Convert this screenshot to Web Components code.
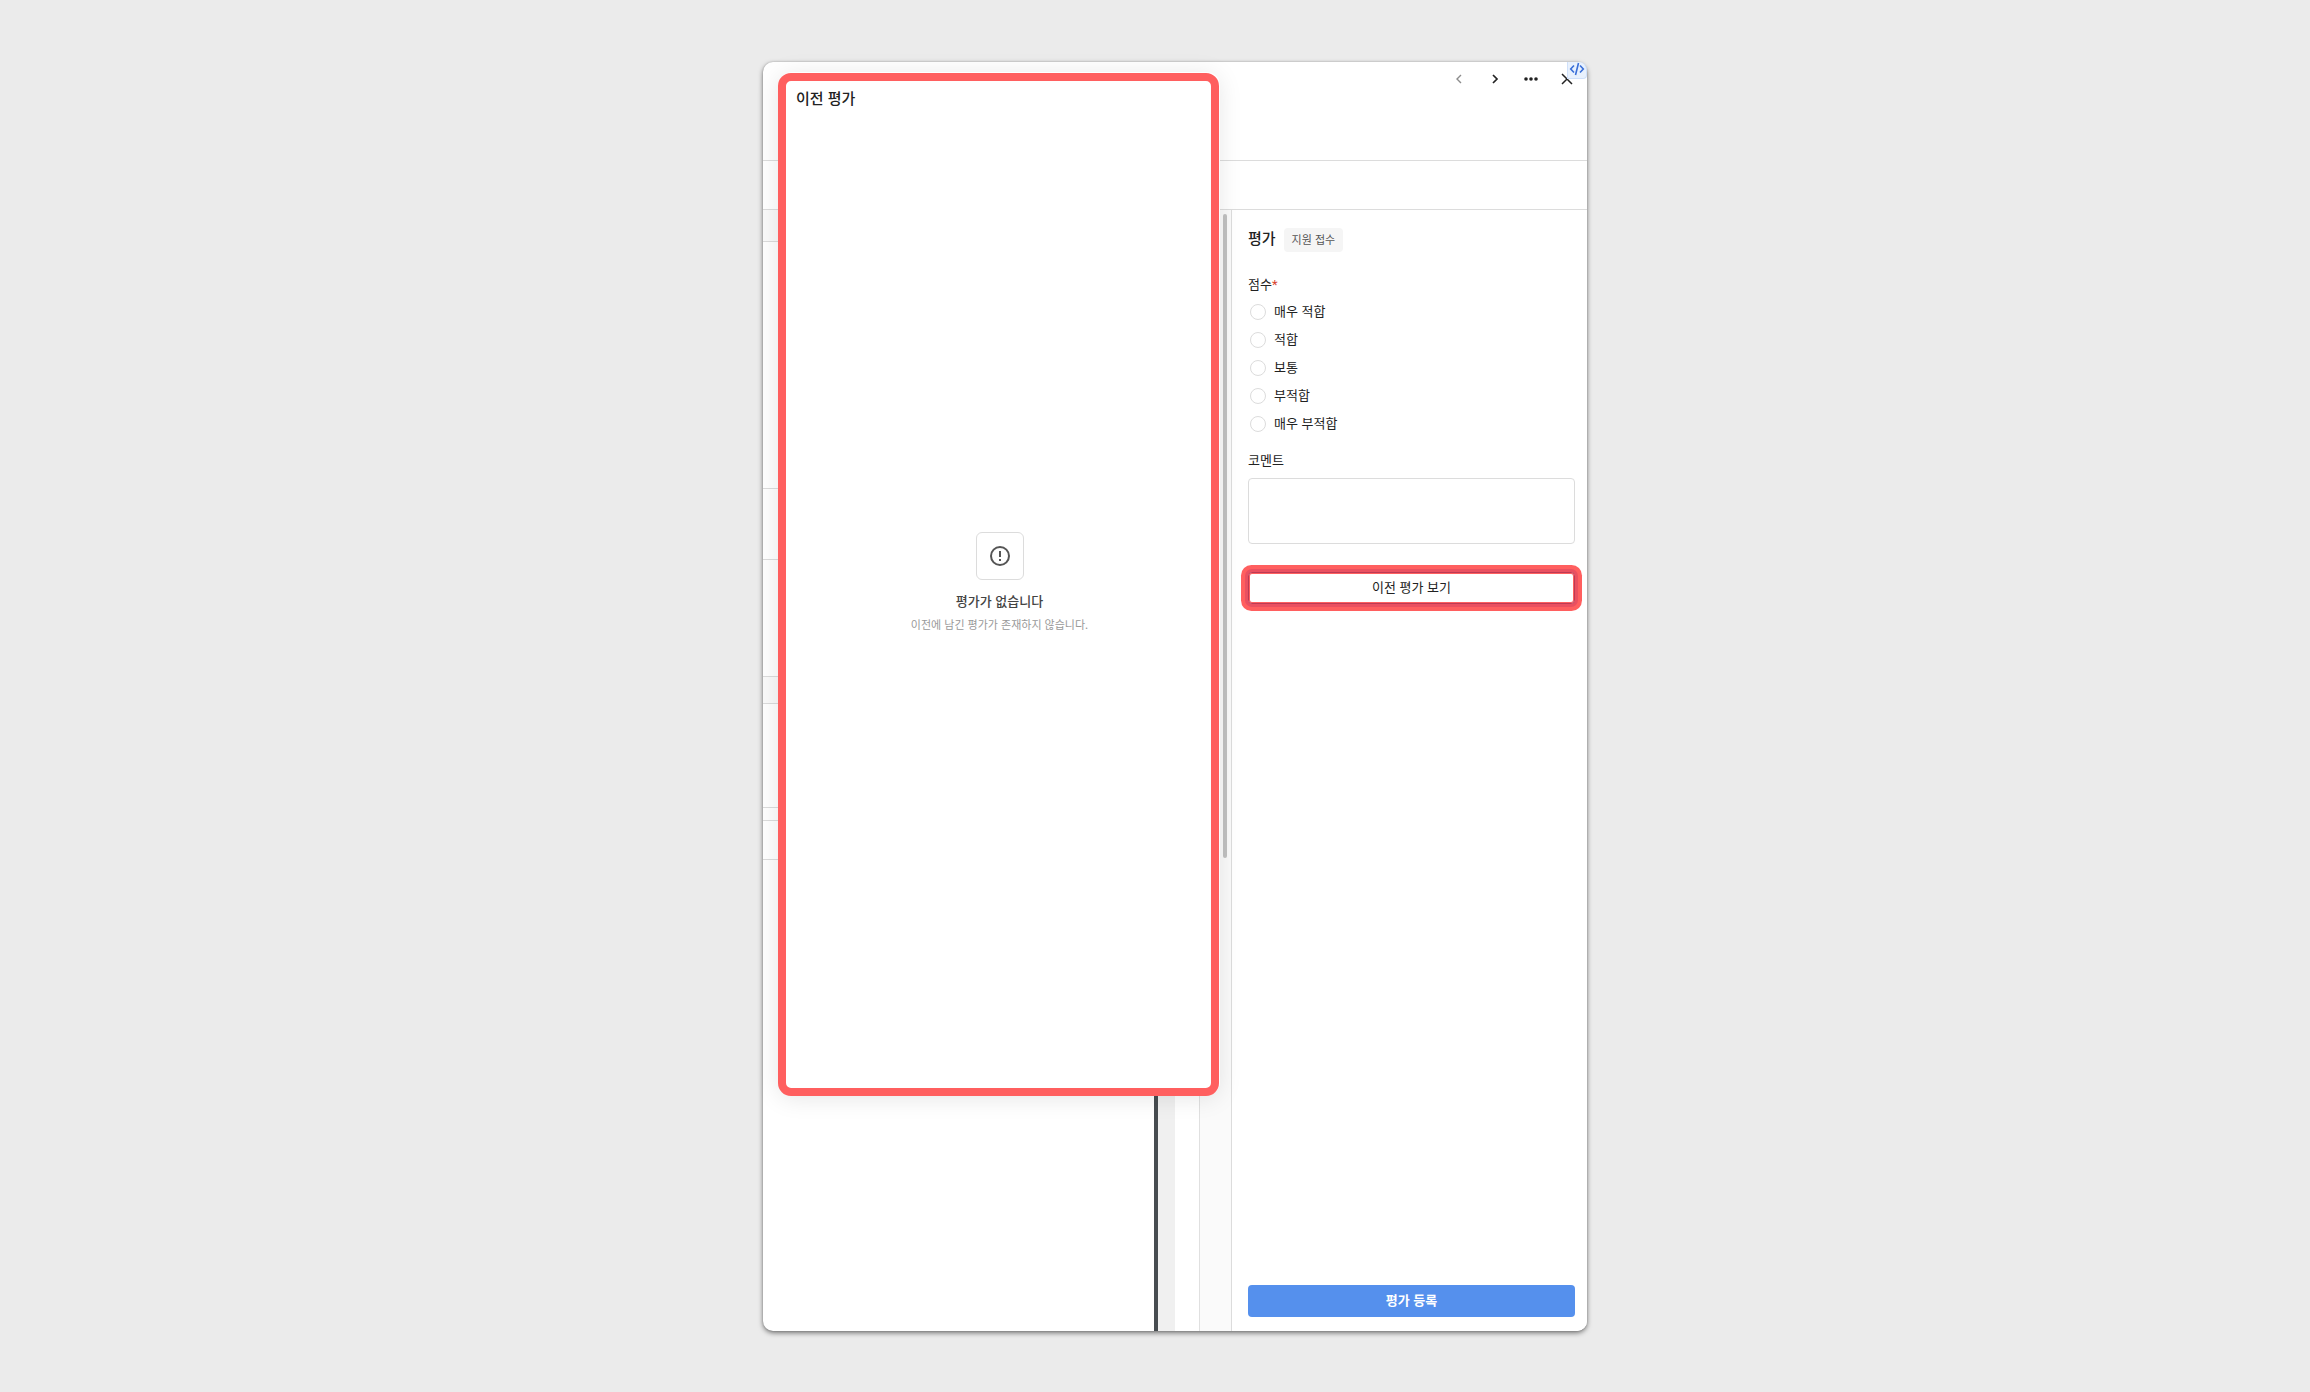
<!DOCTYPE html>
<html lang="ko">
<head>
<meta charset="UTF-8">
<title>평가</title>
<style>
  * { box-sizing: border-box; }

  body {
    margin: 0;
    min-height: 100vh;
    display: flex;
    padding: 62px 723px 61px 763px;
    background: #ebebeb;
    font-family: "Noto Sans CJK KR", "Noto Sans", sans-serif;
    font-size: 13px;
    line-height: 18px;
    color: #222;
  }

  @media (max-width: 1900px) {
    body { padding: 62px 40px 61px; }
  }
</style>
</head>
<body>
  <detail-window>
    <window-actions slot="header"></window-actions>
    <document-pane slot="main"></document-pane>
    <review-form slot="side" stage="지원 접수"></review-form>
    <history-popover slot="popover" heading="이전 평가">
      <empty-state>
        <span slot="title">평가가 없습니다</span>
        <span slot="text">이전에 남긴 평가가 존재하지 않습니다.</span>
      </empty-state>
    </history-popover>
  </detail-window>

<script>
class DetailWindow extends HTMLElement {
  constructor() {
    super();
    this.attachShadow({ mode: "open" });

    this.shadowRoot.innerHTML = `
      <style>
        * { box-sizing: border-box; }

        :host {
          flex: 1;
          display: flex;
          position: relative;
          border-radius: 10px;
          background: #fff;
          box-shadow: 0 2px 5px rgba(0,0,0,0.5), 0 0 2px rgba(0,0,0,0.2);
        }

        .window {
          flex: 1;
          min-width: 0;
          display: flex;
          flex-direction: column;
          border-radius: 10px;
          overflow: hidden;
        }

        header {
          height: 99px;
          border-bottom: 1px solid #dcdcdc;
        }

        .tabs {
          height: 49px;
          border-bottom: 1px solid #dcdcdc;
        }

        .content {
          flex: 1;
          display: grid;
          grid-template-columns: 1fr 356px;
        }

        /* sobre el contenido */
        .popover {
          position: absolute;
          top: 11px;
          bottom: 235px;
          left: 15px;
          right: 368px;
          display: flex;
        }
      </style>

      <div class="window">
        <header><slot name="header"></slot></header>
        <div class="tabs"></div>
        <div class="content">
          <slot name="main"></slot>
          <slot name="side"></slot>
        </div>
      </div>
      <div class="popover"><slot name="popover"></slot></div>
    `;
  }
}

customElements.define("detail-window", DetailWindow);

class WindowActions extends HTMLElement {
  constructor() {
    super();
    this.attachShadow({ mode: "open" });

    this.shadowRoot.innerHTML = `
      <style>
        * { box-sizing: border-box; }

        :host {
          display: flex;
          justify-content: flex-end;
          gap: 12px;
          padding: 5px 8px 0;
        }

        button {
          display: flex;
          align-items: center;
          justify-content: center;
          width: 24px;
          height: 24px;
          padding: 0;
          border: none;
          background: none;
          color: #222;
          cursor: pointer;
        }

        button:disabled { color: #8c8c8c; }

        .code {
          position: absolute;
          top: 0;
          right: 0;
          width: 20px;
          height: 17px;
          padding-bottom: 2px;
          border: 1px solid #cfe0fa;
          border-top: none;
          border-radius: 0 8px 4px 0;
          background: #e8f1fd;
          color: #3a6fd8;
        }

        svg {
          fill: none;
          stroke: currentColor;
        }
      </style>

      <button aria-label="이전" disabled>
        <svg width="16" height="16" viewBox="0 0 16 16" stroke-width="1.4"><path d="M10 4 6 8l4 4"/></svg>
      </button>
      <button aria-label="다음">
        <svg width="16" height="16" viewBox="0 0 16 16" stroke-width="1.7"><path d="m6 4 4 4-4 4"/></svg>
      </button>
      <button aria-label="더보기">
        <svg width="16" height="16" viewBox="0 0 16 16"><g fill="currentColor" stroke="none"><circle cx="3" cy="8" r="1.8"/><circle cx="8" cy="8" r="1.8"/><circle cx="13" cy="8" r="1.8"/></g></svg>
      </button>
      <button aria-label="닫기">
        <svg width="16" height="16" viewBox="0 0 16 16" stroke-width="1.5"><path d="m3 3 10 10M13 3 3 13"/></svg>
      </button>
      <button class="code" aria-label="코드">
        <svg width="16" height="14" viewBox="0 0 16 14" stroke-width="1.6"><path d="M5 3.500 1.700 7 5 10.500M11 3.500 14.300 7 11 10.500M9.500 1 6.500 13"/></svg>
      </button>
    `;
  }
}

customElements.define("window-actions", WindowActions);

class DocumentPane extends HTMLElement {
  constructor() {
    super();
    this.attachShadow({ mode: "open" });

    this.shadowRoot.innerHTML = `
      <style>
        * { box-sizing: border-box; }

        :host {
          display: grid;
          grid-template-columns: 1fr 4px 17px 24px 32px;
          min-width: 0;
        }

        .row { border-bottom: 1px solid #dcdcdc; }
        .gray { background: #fafafa; }
        .dark { background: #474c50; }
        .track { background: #f0f0f0; }

        .gutter {
          padding: 4px 4px 0;
          border-left: 1px solid #e0e0e0;
          background: #fafafa;
        }

        .thumb {
          width: 4px;
          height: 644px;
          margin-left: auto;
          border-radius: 2px;
          background: #c1c1c1;
        }
      </style>

      <div class="rows"></div>
      <div class="dark"></div>
      <div class="track"></div>
      <div></div>
      <div class="gutter"><div class="thumb"></div></div>
    `;
  }

  connectedCallback() {
    // alto de cada bloque del documento
    const rows = [
      { height: 32, gray: true },
      { height: 247 },
      { height: 71 },
      { height: 117 },
      { height: 27, gray: true },
      { height: 104 },
      { height: 13 },
      { height: 39 }
    ];

    this.shadowRoot.querySelector(".rows").innerHTML = rows
      .map(r => `<div class="row ${r.gray ? "gray" : ""}" style="height: ${r.height}px"></div>`)
      .join("");
  }
}

customElements.define("document-pane", DocumentPane);

class ReviewForm extends HTMLElement {
  constructor() {
    super();
    this.attachShadow({ mode: "open" });

    this.shadowRoot.innerHTML = `
      <style>
        * { box-sizing: border-box; }

        :host {
          display: flex;
          border-left: 1px solid #dcdcdc;
          background: #fff;
        }

        form {
          flex: 1;
          min-width: 0;
          display: flex;
          flex-direction: column;
          padding: 18px 12px 14px 16px;
        }

        .title {
          display: flex;
          align-items: flex-start;
          gap: 8px;
          height: 24px;
        }

        h2 {
          margin: 0;
          font-size: 15px;
          line-height: 20px;
          font-weight: 500;
        }

        .tag {
          height: 24px;
          padding: 0 8px;
          border-radius: 4px;
          background: #f5f5f5;
          color: #555;
          font-size: 11px;
          line-height: 22px;
        }

        fieldset {
          margin: 23px 0 0;
          padding: 0;
          border: none;
        }

        legend { padding: 0; }

        .required {
          color: #d9442f;
          font-family: Roboto, sans-serif;
        }

        .options {
          display: flex;
          flex-direction: column;
          gap: 8px;
          padding: 8px 2px 0;
        }

        .option {
          display: flex;
          align-items: flex-start;
          gap: 8px;
          height: 20px;
        }

        input {
          appearance: none;
          width: 16px;
          height: 16px;
          margin: 2px 0;
          border: 1px solid #dcdcdc;
          border-radius: 50%;
          background: #fff;
        }

        input:checked { border: 5px solid #5590ed; }

        .comment { margin: 17px 0 9px; }

        textarea {
          display: block;
          height: 66px;
          padding: 8px;
          border: 1px solid #dcdcdc;
          border-radius: 4px;
          font: inherit;
          resize: none;
        }

        button {
          height: 32px;
          padding: 0 0 2px;
          border-radius: 4px;
          font: inherit;
          cursor: pointer;
        }

        .history {
          margin-top: 28px;
          border: 1px solid #bd3b55;
          background: #fff;
          color: #222;
          box-shadow: inset 0 0 0 1px #ff5f5f, 0 0 0 3px #ea5060, 0 0 0 7px #ff5f5f;
        }

        .submit {
          margin-top: auto;
          border: none;
          background: #5590ed;
          color: #fff;
          font-weight: 700;
        }
      </style>

      <form>
        <div class="title">
          <h2>평가</h2>
          <span class="tag"></span>
        </div>
        <fieldset>
          <legend>점수<span class="required">*</span></legend>
          <div class="options"></div>
        </fieldset>
        <label class="comment" for="comment">코멘트</label>
        <textarea id="comment"></textarea>
        <button type="button" class="history">이전 평가 보기</button>
        <button type="button" class="submit">평가 등록</button>
      </form>
    `;
  }

  connectedCallback() {
    this.shadowRoot.querySelector(".tag").textContent = this.getAttribute("stage");

    const scores = ["매우 적합", "적합", "보통", "부적합", "매우 부적합"];
    this.shadowRoot.querySelector(".options").innerHTML = scores
      .map(s => `<label class="option"><input type="radio" name="score" value="${s}">${s}</label>`)
      .join("");
  }
}

customElements.define("review-form", ReviewForm);

class HistoryPopover extends HTMLElement {
  constructor() {
    super();
    this.attachShadow({ mode: "open" });

    this.shadowRoot.innerHTML = `
      <style>
        * { box-sizing: border-box; }

        :host {
          flex: 1;
          display: flex;
          flex-direction: column;
          border: 8px solid #ff5f5f;
          border-radius: 13px;
          background: #fff;
          box-shadow: 1px -1px 0 #fff, 0 2px 24px rgba(0,0,0,0.1);
        }

        h2 {
          margin: 0;
          padding: 6px 10px 4px;
          font-size: 15px;
          line-height: 22px;
          font-weight: 500;
        }

        .body {
          flex: 1;
          display: flex;
          align-items: center;
          justify-content: center;
          padding: 0 0 36px 2px;
        }
      </style>

      <h2></h2>
      <div class="body"><slot></slot></div>
    `;
  }

  connectedCallback() {
    this.shadowRoot.querySelector("h2").textContent = this.getAttribute("heading");
  }
}

customElements.define("history-popover", HistoryPopover);

class EmptyState extends HTMLElement {
  constructor() {
    super();
    this.attachShadow({ mode: "open" });

    this.shadowRoot.innerHTML = `
      <style>
        * { box-sizing: border-box; }

        :host {
          display: flex;
          flex-direction: column;
          align-items: center;
        }

        .icon {
          display: flex;
          align-items: center;
          justify-content: center;
          width: 48px;
          height: 48px;
          margin-bottom: 12px;
          border: 1px solid #dcdcdc;
          border-radius: 6px;
          color: #555;
        }

        .title {
          font-weight: 500;
          color: #444;
        }

        .text {
          margin-top: 5px;
          font-size: 11px;
          color: #999;
        }
      </style>

      <div class="icon">
        <svg width="24" height="24" viewBox="0 0 24 24" fill="none" stroke="currentColor" stroke-width="2"><circle cx="12" cy="12" r="9"/><path d="M12 7v6M12 15v2"/></svg>
      </div>
      <div class="title"><slot name="title"></slot></div>
      <div class="text"><slot name="text"></slot></div>
    `;
  }
}

customElements.define("empty-state", EmptyState);
</script>
</body>
</html>
